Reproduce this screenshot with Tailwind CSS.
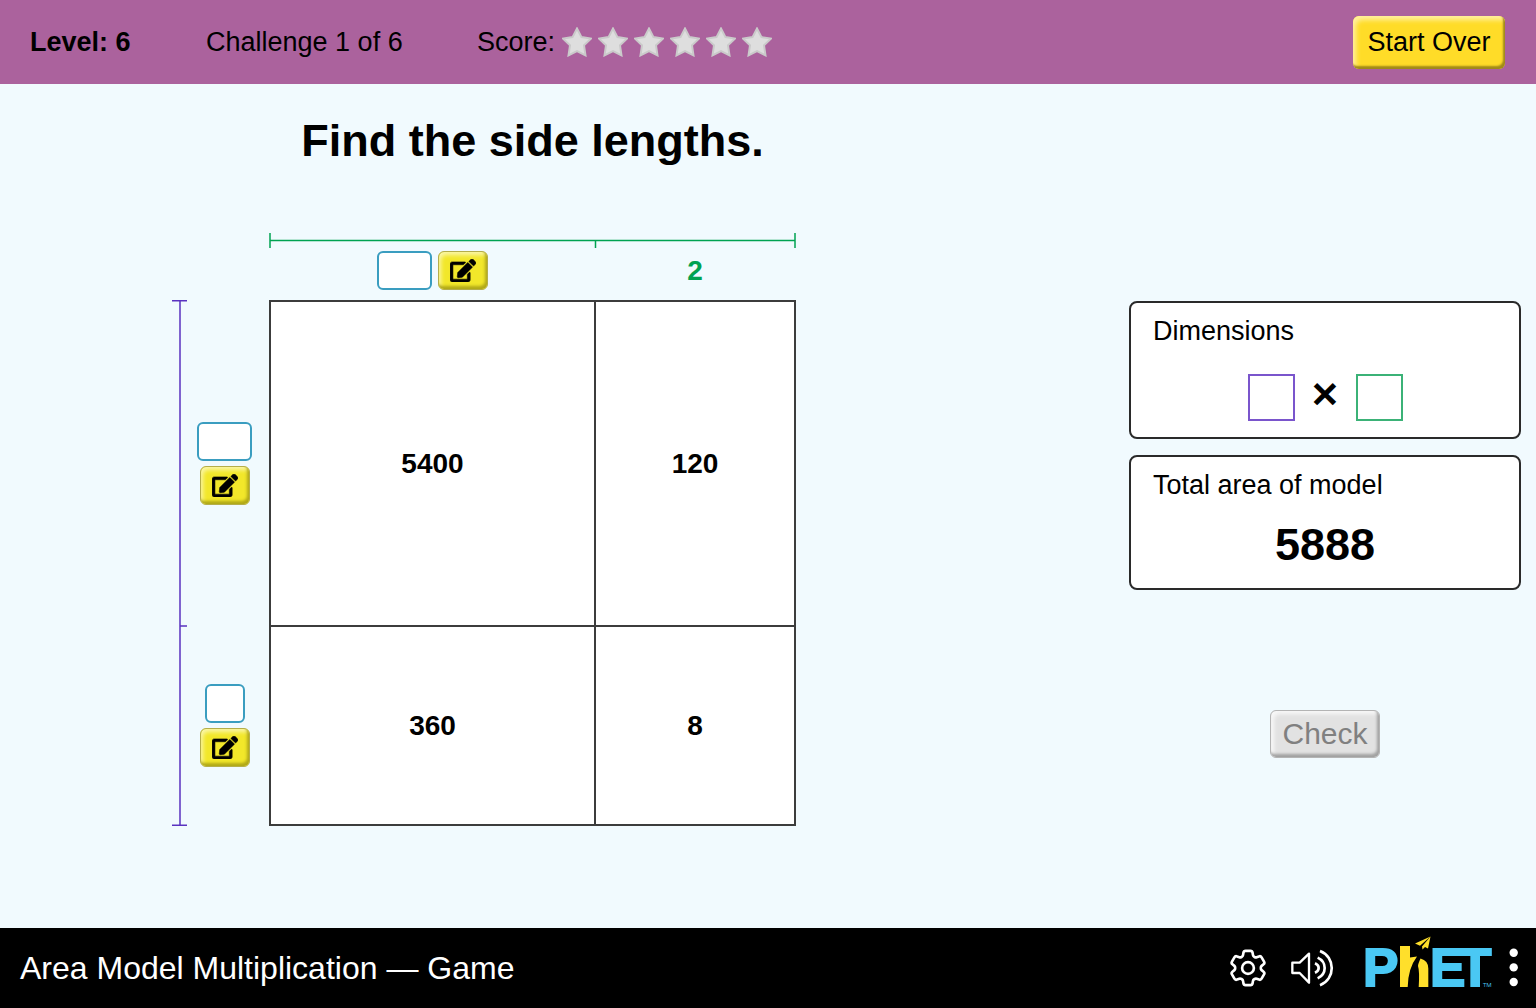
<!DOCTYPE html>
<html lang="en">
<head>
<meta charset="utf-8">
<title>Area Model Multiplication — Game</title>
<script src="https://cdn.jsdelivr.net/npm/@tailwindcss/browser@4"></script>
</head>
<body class="flex min-h-screen flex-col bg-[#f1fafe] font-['Liberation_Sans',Arial,sans-serif] text-[27px] leading-8 text-black">

<svg class="hidden" aria-hidden="true">
  <symbol id="edit" viewBox="0 0 576 512">
    <path stroke="#000" stroke-width="12" d="M402.6 83.2l90.2 90.2c3.8 3.8 3.8 10 0 13.8L274.4 405.6l-92.8 10.3c-12.4 1.4-22.9-9.1-21.5-21.5l10.3-92.8L388.8 83.2c3.8-3.8 10-3.8 13.8 0zm162-22.9l-48.8-48.8c-15.2-15.2-39.9-15.2-55.2 0l-35.4 35.4c-3.8 3.8-3.8 10 0 13.8l90.2 90.2c3.8 3.8 10 3.8 13.8 0l35.4-35.4c15.2-15.3 15.2-40 0-55.2zM384 346.2V448H64V128h229.8c3.2 0 6.2-1.3 8.5-3.5l40-40c7.6-7.6 2.2-20.5-8.5-20.5H48C21.5 64 0 85.5 0 112v352c0 26.5 21.5 48 48 48h352c26.5 0 48-21.5 48-48V306.2c0-10.7-12.9-16-20.5-8.5l-40 40c-2.2 2.3-3.5 5.3-3.5 8.5z"/>
  </symbol>
  <symbol id="star" viewBox="0 0 30 30">
    <path d="M15 1.500l4.500 8.600 9.500 1.500-7 6.800 1.500 10L15 24.200l-8.500 4.200 1.500-10-7-6.800 9.500-1.500z" fill="#dedede" stroke="#cacaca" stroke-width="2"/>
  </symbol>
</svg>

<header class="flex h-[84px] items-center bg-[#ab629d] pl-[30px] pr-[31px]">
  <div class="w-[176px] font-bold">Level: 6</div>
  <div class="w-[271px]">Challenge 1 of 6</div>
  <div class="flex items-center">
    <span class="mr-[7px]">Score:</span>
    <div class="flex gap-[6px]" role="img" aria-label="0 of 6 stars">
      <svg class="size-[30px]"><use href="#star"/></svg>
      <svg class="size-[30px]"><use href="#star"/></svg>
      <svg class="size-[30px]"><use href="#star"/></svg>
      <svg class="size-[30px]"><use href="#star"/></svg>
      <svg class="size-[30px]"><use href="#star"/></svg>
      <svg class="size-[30px]"><use href="#star"/></svg>
    </div>
  </div>
  <button type="button" class="ml-auto h-[53px] w-[152px] rounded-md bg-[#ffdc28] shadow-[inset_-2px_-3px_2px_#a08a18,inset_3px_4px_5px_#fff0a0]">Start Over</button>
</header>

<main class="flex flex-1 items-start justify-between pb-[100px] pl-[172px] pr-[15px] pt-[29px]">
  <section class="grid grid-cols-[16px_81px_527px]">
    <h1 class="col-start-3 mb-[63px] text-center text-[45px] leading-14 font-bold">Find the side lengths.</h1>

    <svg class="col-start-3 h-4 w-full" viewBox="0 0 527 16" fill="none" stroke="#00a251" stroke-width="1.500" aria-hidden="true">
      <path d="M1 1v15M526 1v15M1 8.500h525M326.500 8.500V16"/>
    </svg>

    <div class="col-start-3 grid h-[52px] grid-cols-[326px_200px] pt-[3px]">
      <div class="flex justify-center gap-[6px]">
        <input type="text" aria-label="First column length" class="h-[39px] w-[55px] rounded-md border-2 border-[#3a9dc0] bg-white text-center">
        <button type="button" aria-label="Edit first column length" class="flex h-[39px] w-[50px] items-center justify-center rounded-md border border-[#b5ae4a] bg-[#f2e72a] shadow-[inset_-2px_-3px_3px_#b0a818,inset_2px_3px_4px_#faf6a8]"><svg class="h-[23px] w-[26px]"><use href="#edit"/></svg></button>
      </div>
      <div class="text-center text-[28px] leading-[39px] font-bold text-[#00a251]">2</div>
    </div>

    <svg class="col-start-1 h-full w-4" viewBox="0 0 16 526" fill="none" stroke="#5a32c0" stroke-width="1.500" aria-hidden="true">
      <path d="M0 .75h15M0 525.250h15M8 1v524M8 326h7"/>
    </svg>

    <div class="grid grid-rows-[326px_199px] pr-2">
      <div class="flex flex-col items-center justify-center gap-[5px]">
        <input type="text" aria-label="First row length" class="h-[39px] w-[55px] rounded-md border-2 border-[#3a9dc0] bg-white text-center">
        <button type="button" aria-label="Edit first row length" class="flex h-[39px] w-[50px] items-center justify-center rounded-md border border-[#b5ae4a] bg-[#f2e72a] shadow-[inset_-2px_-3px_3px_#b0a818,inset_2px_3px_4px_#faf6a8]"><svg class="h-[23px] w-[26px]"><use href="#edit"/></svg></button>
      </div>
      <div class="flex flex-col items-center justify-center gap-[5px]">
        <input type="text" aria-label="Second row length" class="h-[39px] w-10 rounded-md border-2 border-[#3a9dc0] bg-white text-center">
        <button type="button" aria-label="Edit second row length" class="flex h-[39px] w-[50px] items-center justify-center rounded-md border border-[#b5ae4a] bg-[#f2e72a] shadow-[inset_-2px_-3px_3px_#b0a818,inset_2px_3px_4px_#faf6a8]"><svg class="h-[23px] w-[26px]"><use href="#edit"/></svg></button>
      </div>
    </div>

    <table class="h-[526px] w-[527px] table-fixed border-collapse bg-white text-center text-[28px] font-bold">
      <colgroup><col class="w-[325px]"><col></colgroup>
      <tbody>
        <tr class="h-[325px]"><td class="border-2 border-[#3c3c3c]">5400</td><td class="border-2 border-[#3c3c3c]">120</td></tr>
        <tr><td class="border-2 border-[#3c3c3c]">360</td><td class="border-2 border-[#3c3c3c]">8</td></tr>
      </tbody>
    </table>
  </section>

  <aside class="flex w-[392px] flex-col items-center pt-[188px]">
    <section class="mb-4 h-[138px] w-full rounded-lg border-2 border-[#2a2a2a] bg-white px-[22px] pt-3">
      <h2>Dimensions</h2>
      <div class="mt-[27px] flex items-center justify-center">
        <span class="size-[47px] border-2 border-[#7a55cc]"></span>
        <span class="w-[61px] pb-2 text-center text-[45px] font-bold">×</span>
        <span class="size-[47px] border-2 border-[#3bb277]"></span>
      </div>
    </section>
    <section class="mb-[120px] h-[135px] w-full rounded-lg border-2 border-[#2a2a2a] bg-white px-[22px] pt-3">
      <h2>Total area of model</h2>
      <p class="mt-4 text-center text-[45px] leading-14 font-bold">5888</p>
    </section>
    <button type="button" disabled class="h-12 w-[110px] rounded-md border border-[#b4b4b4] bg-[#e2e2e2] text-[30px] text-[#808080] shadow-[inset_-2px_-3px_3px_#a0a0a0,inset_3px_3px_4px_#f8f8f8]">Check</button>
  </aside>
</main>

<footer class="flex h-20 items-center bg-black pl-5 pr-4 text-[32px] text-white">
  <span class="mr-auto">Area Model Multiplication — Game</span>
  <button type="button" aria-label="Settings" class="mr-6">
    <svg class="size-[38px]" viewBox="2 2 20 20" fill="none" stroke="#fff" stroke-width="1.400" stroke-linejoin="round">
      <path d="M9.594 3.940c.09-.542.56-.94 1.110-.94h2.593c.55 0 1.020.398 1.110.94l.213 1.281c.063.374.313.686.645.87.074.04.147.083.22.127.325.196.72.257 1.075.124l1.217-.456a1.125 1.125 0 0 1 1.370.49l1.296 2.247a1.125 1.125 0 0 1-.26 1.431l-1.003.827c-.293.241-.438.613-.43.992a7.723 7.723 0 0 1 0 .255c-.008.378.137.75.43.991l1.004.827c.424.35.534.955.26 1.430l-1.298 2.247a1.125 1.125 0 0 1-1.369.491l-1.217-.456c-.355-.133-.75-.072-1.076.124a6.470 6.470 0 0 1-.22.128c-.331.183-.581.495-.644.869l-.213 1.281c-.09.543-.56.94-1.110.94h-2.594c-.55 0-1.019-.398-1.110-.94l-.213-1.281c-.062-.374-.312-.686-.644-.87a6.520 6.520 0 0 1-.22-.127c-.325-.196-.72-.257-1.076-.124l-1.217.456a1.125 1.125 0 0 1-1.369-.49l-1.297-2.247a1.125 1.125 0 0 1 .26-1.431l1.004-.827c.292-.24.437-.613.43-.991a6.932 6.932 0 0 1 0-.255c.007-.38-.138-.751-.43-.992l-1.004-.827a1.125 1.125 0 0 1-.26-1.430l1.297-2.247a1.125 1.125 0 0 1 1.370-.491l1.216.456c.356.133.751.072 1.076-.124.072-.044.146-.086.22-.128.332-.183.582-.495.644-.869l.214-1.280Z"/>
      <circle cx="12" cy="12" r="3.100"/>
    </svg>
  </button>
  <button type="button" aria-label="Sound" class="mr-[29px]">
    <svg class="h-[38px] w-11" viewBox="225 39 132 114" fill="none" stroke="#fff" stroke-width="7">
      <path stroke-linejoin="round" d="M229 80h22l28-27v87l-28-29h-22z"/>
      <path stroke-width="8" d="M297 82q11 5 11 14t-11 14M305 65q21 10 21 31t-21 31M312 45c47 18 47 84 0 103"/>
    </svg>
  </button>
  <button type="button" aria-label="PhET menu" class="flex items-center">
    <svg class="h-[60px] w-[156px] overflow-visible" viewBox="0 0 156 60" fill="#4ac8f4">
      <g font-family="Liberation Sans, Arial, sans-serif" font-weight="700" font-size="53" stroke="#4ac8f4" stroke-width="2">
        <text x="-1" y="48">P</text>
        <text x="66" y="48">E</text>
        <text x="95" y="48">T</text>
      </g>
      <path d="M90 10h14v8H90z"/>
      <text x="119" y="49" font-family="Open Sans, sans-serif" font-size="6">TM</text>
      <g fill="#ffdf2b">
        <path d="M36 8h10v11.500l7-1q-9 12-9.300 30.500H36z"/>
        <path d="M56.500 20.500q7.800 2 7.800 10V49H54.700q1-16-.7-21 0-2 2.500-7.500z"/>
        <path d="M66.500-1.500L51 5.500l5 2.300zM66.500-1.500L58 8.500l.5 3 2.500-2.500 3 1.500z"/>
      </g>
      <g fill="#fff"><circle cx="149.700" cy="14.700" r="4.200"/><circle cx="149.700" cy="29.400" r="4.200"/><circle cx="149.700" cy="44" r="4.200"/></g>
    </svg>
  </button>
</footer>
</body>
</html>
